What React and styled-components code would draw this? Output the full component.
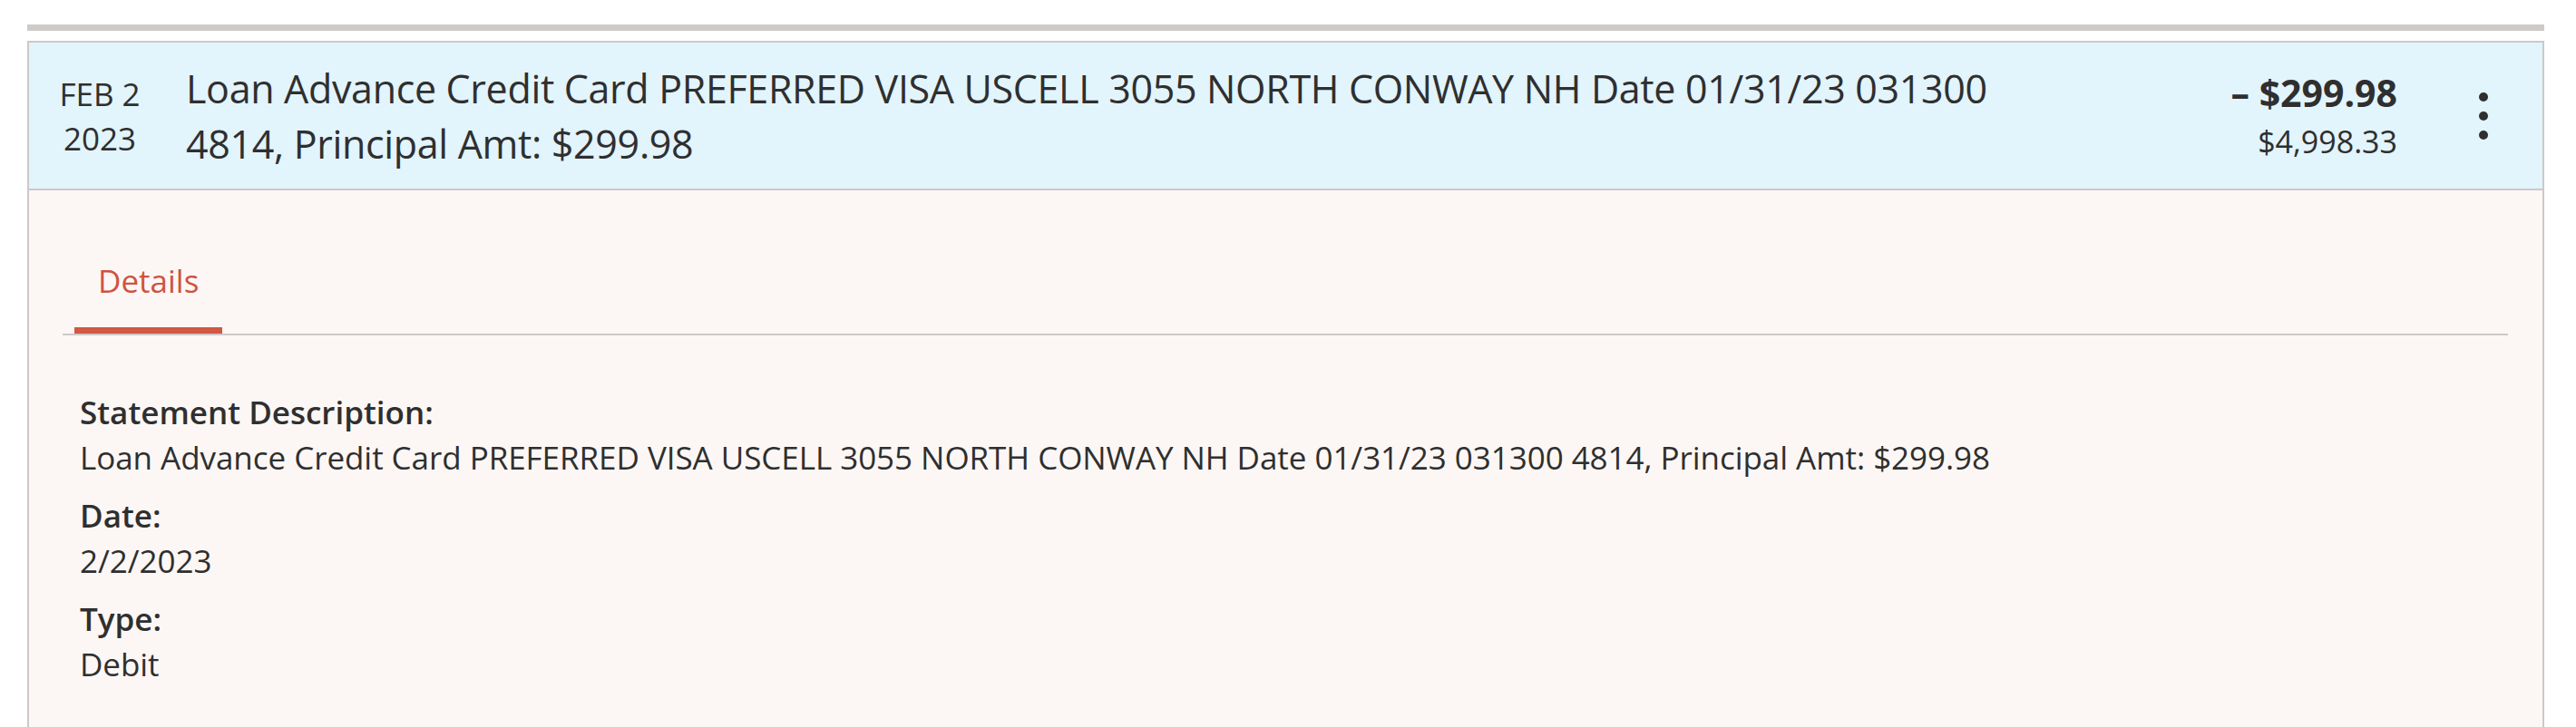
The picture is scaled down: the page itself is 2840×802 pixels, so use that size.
import React from "react";
import styled, { createGlobalStyle } from "styled-components";

const GlobalStyle = createGlobalStyle`
  body {
    margin: 0;
    background: #ffffff;
    font-family: "Open Sans", "Liberation Sans", sans-serif;
    color: #2f2f2f;
  }
`;

const transaction = {
  month: "FEB 2",
  year: "2023",
  description:
    "Loan Advance Credit Card PREFERRED VISA USCELL 3055 NORTH CONWAY NH Date 01/31/23 031300 4814, Principal Amt: $299.98",
  amount: "– $299.98",
  balance: "$4,998.33",
  details: [
    {
      label: "Statement Description:",
      value:
        "Loan Advance Credit Card PREFERRED VISA USCELL 3055 NORTH CONWAY NH Date 01/31/23 031300 4814, Principal Amt: $299.98",
    },
    { label: "Date:", value: "2/2/2023" },
    { label: "Type:", value: "Debit" },
  ],
};

const KebabIcon = () => (
  <svg width="10" height="52" viewBox="0 0 10 52" aria-hidden="true">
    <circle cx="5" cy="5" r="5" fill="#2f2f2f" />
    <circle cx="5" cy="26" r="5" fill="#2f2f2f" />
    <circle cx="5" cy="47" r="5" fill="#2f2f2f" />
  </svg>
);

const App = () => {
  return (
    <>
      <GlobalStyle />
      <Page>
        <Divider />
        <Card>
          <Summary>
            <DateCol>
              <div>{transaction.month}</div>
              <div>{transaction.year}</div>
            </DateCol>
            <Description>{transaction.description}</Description>
            <AmountCol>
              <Amount>{transaction.amount}</Amount>
              <Balance>{transaction.balance}</Balance>
            </AmountCol>
            <MenuButton type="button" aria-label="More actions">
              <KebabIcon />
            </MenuButton>
          </Summary>

          <Body>
            <TabList>
              <Tab $active>Details</Tab>
            </TabList>

            <Fields>
              {transaction.details.map((item) => (
                <Field key={item.label}>
                  <Label>{item.label}</Label>
                  <Value>{item.value}</Value>
                </Field>
              ))}
            </Fields>
          </Body>
        </Card>
      </Page>
    </>
  );
};

export default App;

const Page = styled.div`
  padding: 27px 35px 0 30px;
`;

const Divider = styled.div`
  height: 7px;
  background: #cfcaca;
  margin-bottom: 11px;
`;

const Card = styled.div`
  border: 2px solid #cdc9c9;
  border-bottom: none;
`;

const Summary = styled.div`
  display: flex;
  align-items: center;
  height: 161px;
  background: #e2f4fc;
  border-bottom: 2px solid #cdc9c9;
`;

const DateCol = styled.div`
  flex-shrink: 0;
  width: 156px;
  text-align: center;
  font-size: 35px;
  line-height: 49px;
`;

const Description = styled.div`
  flex: 1;
  margin-left: 17px;
  font-size: 43px;
  letter-spacing: -0.33px;
  line-height: 61px;
`;

const AmountCol = styled.div`
  flex-shrink: 0;
  margin-left: 200px;
  text-align: right;
  white-space: nowrap;
`;

const Amount = styled.div`
  font-size: 41px;
  font-weight: 700;
  line-height: 58px;
`;

const Balance = styled.div`
  font-size: 34px;
  line-height: 51px;
`;

const MenuButton = styled.button`
  display: flex;
  align-items: center;
  justify-content: center;
  width: 40px;
  height: 80px;
  margin: 0 45px 0 75px;
  padding: 0;
  border: none;
  background: transparent;
  cursor: pointer;
`;

const Body = styled.div`
  background: #fcf7f5;
  padding: 75px 38px 60px 37px;
`;

const TabList = styled.div`
  display: flex;
  border-bottom: 2px solid #cdc9c9;
`;

const Tab = styled.div`
  margin-left: 13px;
  padding: 0 26px 26px;
  font-size: 35px;
  line-height: 50px;
  color: ${(p) => (p.$active ? "#d0533f" : "#2f2f2f")};
  border-bottom: 7px solid ${(p) => (p.$active ? "#d15841" : "transparent")};
`;

const Fields = styled.div`
  display: flex;
  flex-direction: column;
  gap: 14px;
  padding: 60px 0 0 19px;
`;

const Field = styled.div`
  font-size: 35px;
  line-height: 50px;
`;

const Label = styled.div`
  font-weight: 600;
`;

const Value = styled.div`
  letter-spacing: -0.05px;
`;
